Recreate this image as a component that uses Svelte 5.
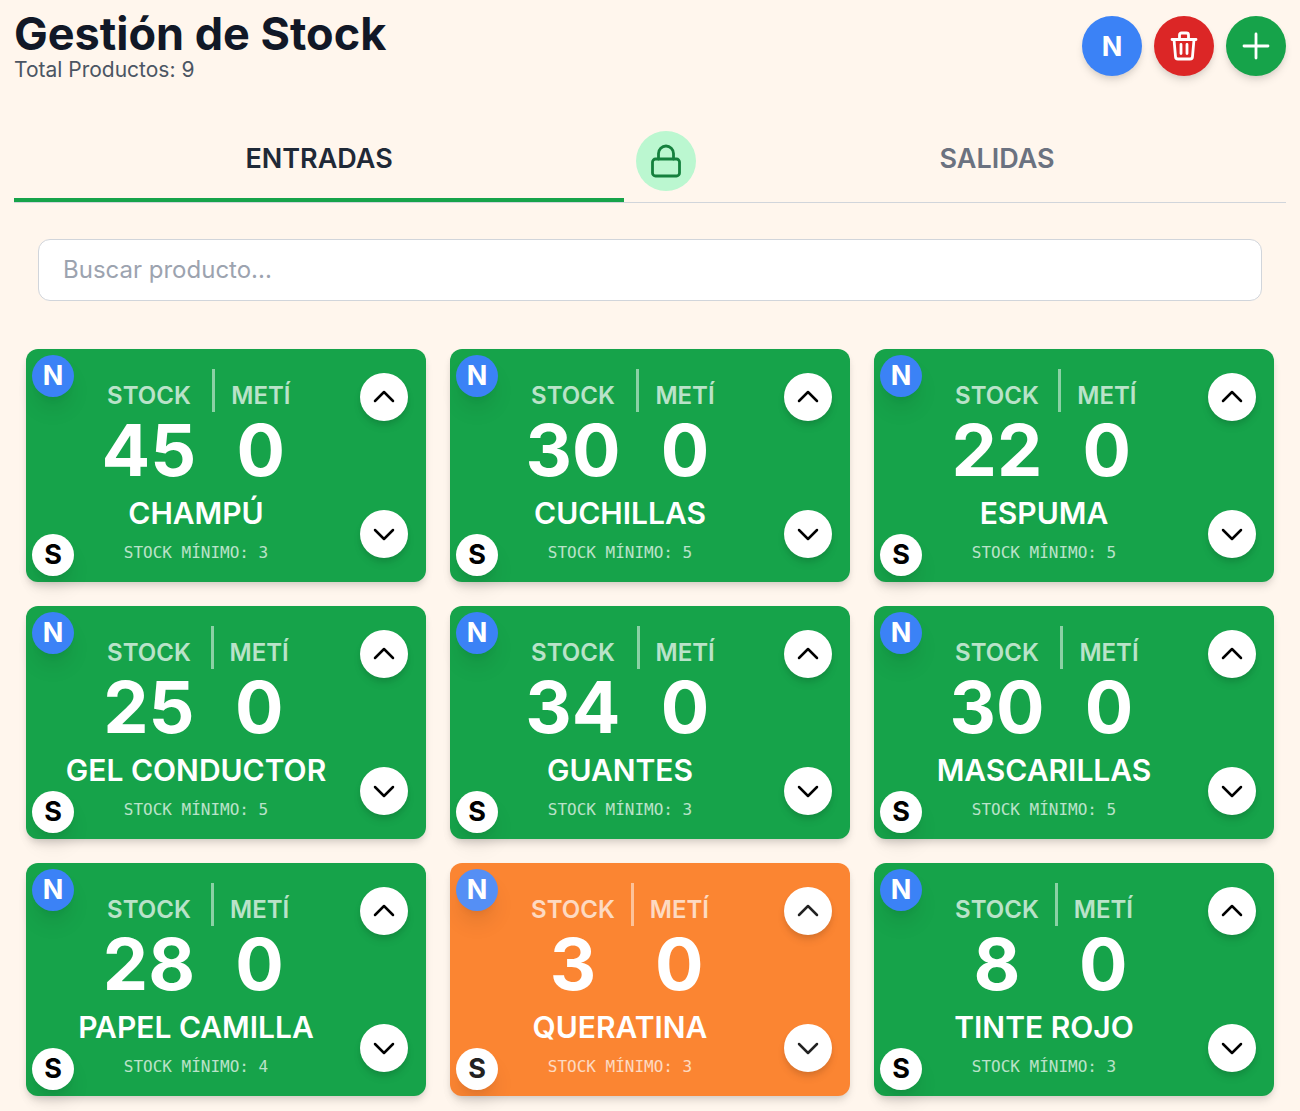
<script lang="ts">
	interface Product {
		name: string;
		stock: number;
		added: number;
		min: number;
	}

	let products: Product[] = $state([
		{ name: 'Champú', stock: 45, added: 0, min: 3 },
		{ name: 'Cuchillas', stock: 30, added: 0, min: 5 },
		{ name: 'Espuma', stock: 22, added: 0, min: 5 },
		{ name: 'Gel conductor', stock: 25, added: 0, min: 5 },
		{ name: 'Guantes', stock: 34, added: 0, min: 3 },
		{ name: 'Mascarillas', stock: 30, added: 0, min: 5 },
		{ name: 'Papel camilla', stock: 28, added: 0, min: 4 },
		{ name: 'Queratina', stock: 3, added: 0, min: 3 },
		{ name: 'Tinte rojo', stock: 8, added: 0, min: 3 }
	]);
	let tab = $state('entradas');
	let search = $state('');

	let visible = $derived(
		products.filter((p) => p.name.toLowerCase().includes(search.toLowerCase()))
	);

	function change(product: Product, amount: number) {
		if (product.added + amount < 0) return;
		product.added += amount;
		product.stock += amount;
	}
</script>

<main>
	<header>
		<div>
			<h1>Gestión de Stock</h1>
			<p class="total">Total Productos: {products.length}</p>
		</div>
		<div class="actions">
			<button class="round blue">N</button>
			<button class="round red" aria-label="Eliminar">
				<svg viewBox="0 0 36 36" width="36" height="36">
					<path d="M6 10.5h24M8 10.5l1.500 17a2.500 2.500 0 0 0 2.500 2.500h12a2.500 2.500 0 0 0 2.500-2.500l1.500-17" transform="translate(0 1)" />
					<path d="M13.500 11V7a2 2 0 0 1 2-2h5a2 2 0 0 1 2 2v4M15 16.500v9M21 16.500v9" />
				</svg>
			</button>
			<button class="round green" aria-label="Añadir">
				<svg viewBox="0 0 36 36" width="36" height="36">
					<path d="M18 6v24M6 18h24" />
				</svg>
			</button>
		</div>
	</header>

	<nav>
		<button class="tab" class:active={tab === 'entradas'} onclick={() => (tab = 'entradas')}>
			ENTRADAS
		</button>
		<button class="round lock" aria-label="Bloquear">
			<svg viewBox="0 0 36 36" width="36" height="36">
				<path d="M10.500 16v-5.500a7.500 7.500 0 0 1 15 0V16" />
				<rect x="4.500" y="16" width="27" height="17" rx="3" />
			</svg>
		</button>
		<button class="tab" class:active={tab === 'salidas'} onclick={() => (tab = 'salidas')}>
			SALIDAS
		</button>
	</nav>

	<div class="search">
		<input
			type="text"
			placeholder="Buscar producto..."
			aria-label="Buscar producto"
			bind:value={search}
		/>
	</div>

	<div class="grid">
		{#each visible as product (product.name)}
			<article class="card" class:low={product.stock <= product.min}>
				<span class="badge top">N</span>
				<span class="badge bottom">S</span>
				<div class="info">
					<div class="counts">
						<div class="count">
							<span class="label">STOCK</span>
							<span class="number">{product.stock}</span>
						</div>
						<div class="separator"></div>
						<div class="count">
							<span class="label">METÍ</span>
							<span class="number">{product.added}</span>
						</div>
					</div>
					<h2>{product.name}</h2>
					<p class="min">Stock mínimo: {product.min}</p>
				</div>
				<div class="arrows">
					<button aria-label="Sumar {product.name}" onclick={() => change(product, 1)}>
						<svg viewBox="0 0 24 24" width="24" height="24">
							<path d="M3 16l9-9 9 9" />
						</svg>
					</button>
					<button aria-label="Restar {product.name}" onclick={() => change(product, -1)}>
						<svg viewBox="0 0 24 24" width="24" height="24">
							<path d="M3 8l9 9 9-9" />
						</svg>
					</button>
				</div>
			</article>
		{/each}
	</div>
</main>

<style>
	:global(body) {
		background: #fff6ed;
	}
	main {
		padding: 14px 14px 16px;
		font-family: Inter, 'Liberation Sans', sans-serif;
		color: #111827;
	}
	h1,
	h2,
	p {
		margin: 0;
	}
	button {
		border: none;
		padding: 0;
		font-family: inherit;
		cursor: pointer;
	}
	svg {
		display: block;
		fill: none;
		stroke: currentColor;
		stroke-width: 2.5;
		stroke-linecap: round;
		stroke-linejoin: round;
	}

	header {
		display: flex;
		justify-content: space-between;
		align-items: flex-start;
	}
	h1 {
		font-size: 45px;
		line-height: 40px;
		font-weight: 700;
	}
	.total {
		font-size: 21px;
		line-height: 32px;
		color: #4b5563;
	}
	.actions {
		display: flex;
		gap: 12px;
		padding-top: 2px;
	}
	.round {
		display: flex;
		align-items: center;
		justify-content: center;
		flex: none;
		width: 60px;
		height: 60px;
		border-radius: 50%;
		font-size: 27px;
		font-weight: 700;
		color: #fff;
		box-shadow:
			0 6px 9px -1px rgba(0, 0, 0, 0.1),
			0 3px 6px -2px rgba(0, 0, 0, 0.1);
	}
	.round svg {
		stroke-width: 2.8;
	}
	.blue {
		background: #3b82f6;
	}
	.red {
		background: #dc2626;
	}
	.green {
		background: #16a34a;
	}
	.lock {
		background: #bbf7d0;
		color: #15803d;
		box-shadow: none;
	}

	nav {
		display: flex;
		align-items: center;
		gap: 12px;
		margin-top: 33px;
		border-bottom: 1px solid #d1d5db;
	}
	.tab {
		flex: 1 1 auto;
		height: 83px;
		background: none;
		border-bottom: 4px solid transparent;
		font-size: 27px;
		font-weight: 600;
		color: #6b7280;
	}
	.tab.active {
		border-bottom-color: #16a34a;
		color: #1f2937;
	}

	.search {
		padding: 36px 24px 48px;
	}
	input {
		display: block;
		box-sizing: border-box;
		width: 100%;
		height: 62px;
		padding: 0 24px 2px;
		border: 1px solid #d1d5db;
		border-radius: 12px;
		background: #fff;
		font-family: inherit;
		font-size: 24px;
		color: #111827;
	}
	input::placeholder {
		color: #9ca3af;
	}

	.grid {
		display: grid;
		grid-template-columns: repeat(3, 1fr);
		gap: 24px;
		padding: 0 12px;
	}
	.card {
		position: relative;
		display: flex;
		gap: 12px;
		padding: 0 18px;
		border-radius: 12px;
		background: #16a34a;
		color: #fff;
		box-shadow:
			0 6px 9px -1px rgba(0, 0, 0, 0.1),
			0 3px 6px -2px rgba(0, 0, 0, 0.1);
	}
	.card.low {
		background: #fb8532;
	}
	.info {
		flex: 1;
		display: flex;
		flex-direction: column;
		align-items: center;
		padding: 20px 0 17px;
	}
	.counts {
		display: flex;
		gap: 16px;
	}
	.count {
		display: flex;
		flex-direction: column;
		align-items: center;
		padding-top: 9px;
	}
	.label {
		font-size: 24px;
		line-height: 36px;
		font-weight: 600;
		opacity: 0.7;
	}
	.number {
		font-size: 72px;
		line-height: 72px;
		font-weight: 700;
	}
	.separator {
		width: 3px;
		height: 43px;
		background: #fff;
		opacity: 0.5;
	}
	h2 {
		margin-top: 6px;
		font-size: 30px;
		line-height: 42px;
		font-weight: 600;
		text-transform: uppercase;
		white-space: nowrap;
	}
	.min {
		margin-top: 7px;
		font-family: 'DejaVu Sans Mono', monospace;
		font-size: 16px;
		line-height: 24px;
		text-transform: uppercase;
		opacity: 0.7;
	}
	.arrows {
		display: flex;
		flex-direction: column;
		justify-content: space-between;
		padding: 24px 0;
	}
	.arrows button {
		display: flex;
		align-items: center;
		justify-content: center;
		width: 48px;
		height: 48px;
		border-radius: 50%;
		background: #fff;
		color: #000;
		box-shadow:
			0 6px 9px -1px rgba(0, 0, 0, 0.1),
			0 3px 6px -2px rgba(0, 0, 0, 0.1);
	}
	.low .arrows button,
	.low .bottom {
		color: #222;
	}
	.badge {
		position: absolute;
		left: 6px;
		width: 42px;
		height: 42px;
		border-radius: 50%;
		font-size: 27px;
		line-height: 42px;
		font-weight: 700;
		text-align: center;
		box-shadow:
			0 15px 22px -4px rgba(0, 0, 0, 0.1),
			0 6px 9px -6px rgba(0, 0, 0, 0.1);
	}
	.top {
		top: 6px;
		background: #3b82f6;
	}
	.bottom {
		bottom: 6px;
		background: #fff;
		color: #000;
	}
	.low .top {
		background: #558ff5;
	}
	.low .bottom {
		color: #222;
	}
</style>
